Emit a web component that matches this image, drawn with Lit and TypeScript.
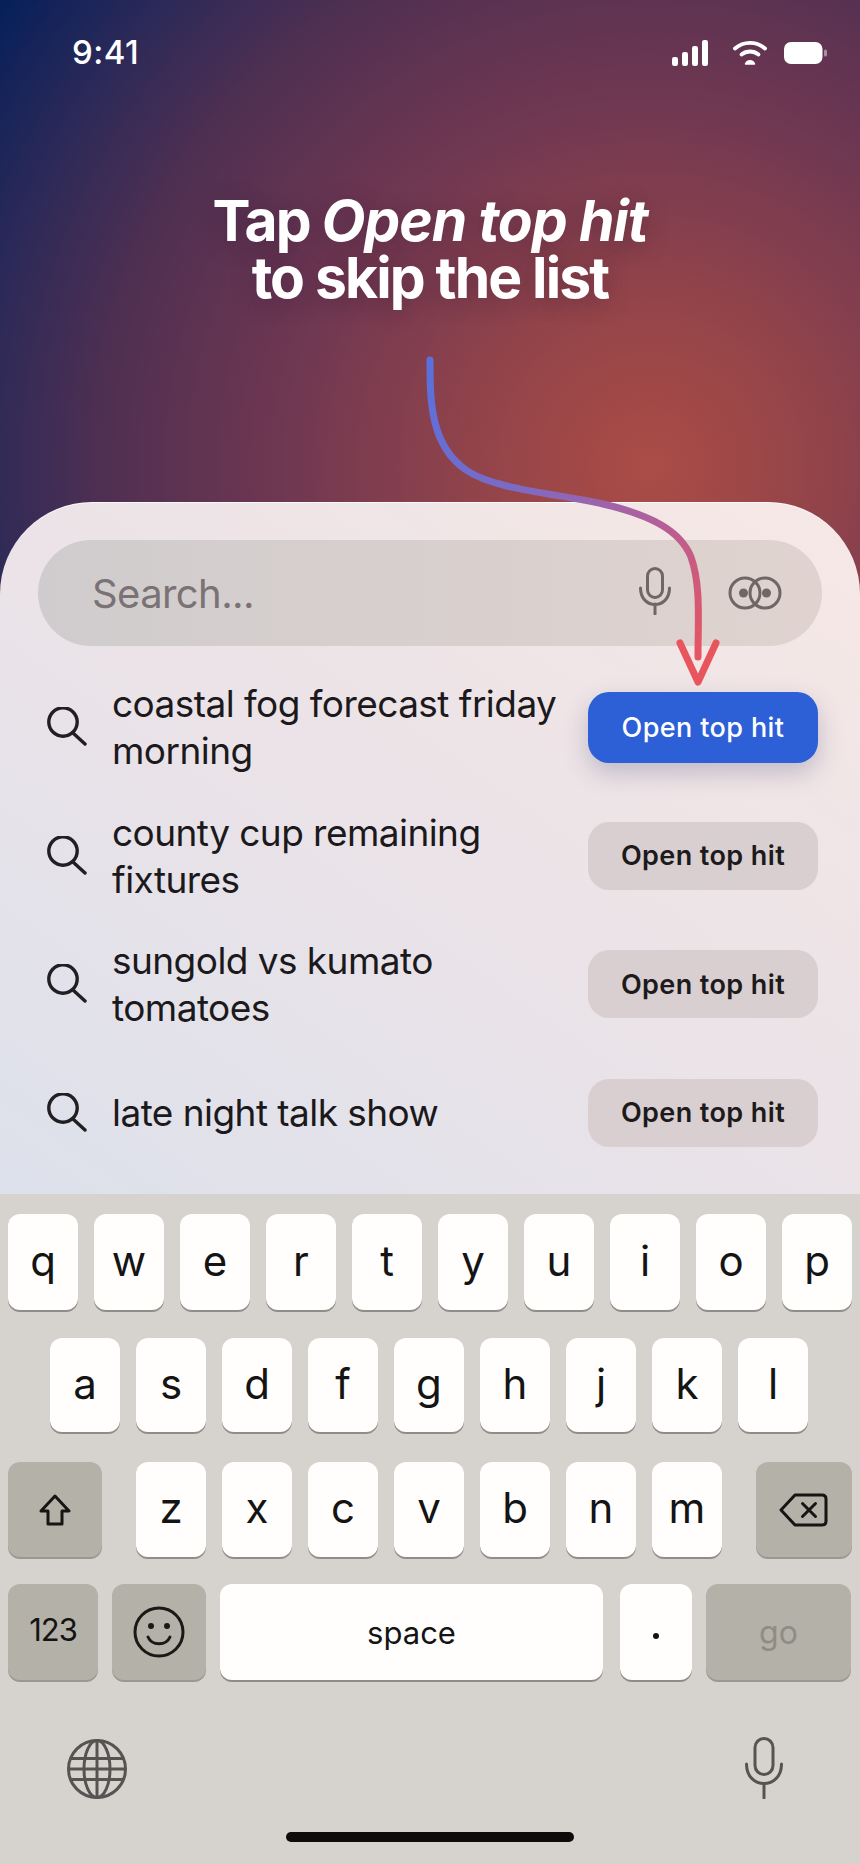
import {css, html, LitElement, svg, TemplateResult} from "lit";
import {customElement} from "lit/decorators.js";

const ROW1 = ["q", "w", "e", "r", "t", "y", "u", "i", "o", "p"];
const ROW2 = ["a", "s", "d", "f", "g", "h", "j", "k", "l"];
const ROW3 = ["z", "x", "c", "v", "b", "n", "m"];

const HITS = [
    {text: "coastal fog forecast friday morning", primary: true},
    {text: "county cup remaining fixtures", primary: false},
    {text: "sungold vs kumato tomatoes", primary: false},
    {text: "late night talk show", primary: false},
];

const searchIcon = svg`<circle cx="16" cy="15" r="14.2" fill="none" stroke="#211f21" stroke-width="3.4"/>
    <path d="M26 26 L38 37" fill="none" stroke="#211f21" stroke-width="3.4" stroke-linecap="round"/>`;

@customElement("app-root")
export class AppRoot extends LitElement {
    private renderHit(hit: {text: string; primary: boolean}): TemplateResult {
        return html`
            <div class="hit">
                <svg class="hit-icon" width="40" height="40" viewBox="0 0 40 40">${searchIcon}</svg>
                <div class="hit-text">${hit.text}</div>
                <div class="hit-btn ${hit.primary ? "primary" : ""}">Open top hit</div>
            </div>
        `;
    }

    private renderKeys(keys: string[]): TemplateResult[] {
        return keys.map((k) => html`<div class="key letter">${k}</div>`);
    }

    render(): TemplateResult {
        return html`
            <div class="hero">
                <div class="status">
                    <div class="time">9:41</div>
                    <div class="status-icons">
                        <svg width="36" height="26" viewBox="0 0 36 26">
                            <rect x="0" y="17" width="6" height="9" rx="2.2" fill="#fff"/>
                            <rect x="10" y="12" width="6" height="14" rx="2.2" fill="#fff"/>
                            <rect x="20" y="6" width="6" height="20" rx="2.2" fill="#fff"/>
                            <rect x="30" y="0" width="6" height="26" rx="2.2" fill="#fff"/>
                        </svg>
                        <svg class="wifi" width="34" height="26" viewBox="0 0 34 26">
                            <path d="M2 8.5 C10.500 1 23.500 1 32 8.500" fill="none" stroke="#fff" stroke-width="3.800" stroke-linecap="round"/>
                            <path d="M8.500 14.500 C13.500 10.500 20.500 10.500 25.500 14.500" fill="none" stroke="#fff" stroke-width="3.800" stroke-linecap="round"/>
                            <path d="M12.500 24 C14 19.500 20 19.500 21.500 24 Z" fill="#fff" stroke="#fff" stroke-width="1.500" stroke-linejoin="round"/>
                        </svg>
                        <svg class="battery" width="44" height="22" viewBox="0 0 44 22">
                            <rect x="0" y="0" width="38.500" height="22" rx="7" fill="#fff"/>
                            <rect x="40" y="7.500" width="3" height="7" rx="1.500" fill="#fff" fill-opacity="0.45"/>
                        </svg>
                    </div>
                </div>
                <div class="headline">Tap <em>Open top hit</em><br />to skip the list</div>
            </div>

            <div class="sheet">
                <div class="search">
                    <div class="search-text">Search...</div>
                    <svg class="search-mic" width="32" height="48" viewBox="0 0 32 48">
                        <rect x="8.500" y="1.500" width="15" height="29" rx="7.500" fill="none" stroke="#6f6666" stroke-width="3"/>
                        <path d="M1.500 21 C1.500 43 30.500 43 30.500 21 M16 37 V47" fill="none" stroke="#6f6666" stroke-width="3" stroke-linecap="round"/>
                    </svg>
                    <svg class="search-loop" width="54" height="34" viewBox="0 0 54 34">
                        <circle cx="17" cy="17" r="15" fill="none" stroke="#6f6666" stroke-width="3"/>
                        <circle cx="37" cy="17" r="15" fill="none" stroke="#6f6666" stroke-width="3"/>
                        <circle cx="15.500" cy="17" r="4.500" fill="#6f6666"/>
                        <circle cx="38.500" cy="17" r="4.500" fill="#6f6666"/>
                    </svg>
                </div>
                <div class="hits">${HITS.map((h) => this.renderHit(h))}</div>
            </div>

            <div class="keyboard">
                <div class="row row-1">${this.renderKeys(ROW1)}</div>
                <div class="row row-2">${this.renderKeys(ROW2)}</div>
                <div class="row row-3">
                    <div class="key dark shift">
                        <svg width="34" height="32" viewBox="0 0 34 32">
                            <path d="M17 2 L31 17 H24 V30 H10 V17 H3 Z" fill="none" stroke="#161514" stroke-width="3" stroke-linejoin="round"/>
                        </svg>
                    </div>
                    <div class="letters">${this.renderKeys(ROW3)}</div>
                    <div class="key dark del">
                        <svg width="50" height="34" viewBox="0 0 50 34">
                            <path d="M2 17 L16 2 H43 Q47 2 47 6 V28 Q47 32 43 32 H16 Z" fill="none" stroke="#161514" stroke-width="3" stroke-linejoin="round"/>
                            <path d="M23.500 10.500 L36.500 23.500 M36.500 10.500 L23.500 23.500" fill="none" stroke="#161514" stroke-width="3" stroke-linecap="round"/>
                        </svg>
                    </div>
                </div>
                <div class="row row-4">
                    <div class="key dark num">123</div>
                    <div class="key dark emoji">
                        <svg width="52" height="52" viewBox="0 0 52 52">
                            <circle cx="26" cy="26" r="24" fill="none" stroke="#1a1918" stroke-width="3"/>
                            <circle cx="18" cy="20" r="3" fill="#1a1918"/>
                            <circle cx="34" cy="20" r="3" fill="#1a1918"/>
                            <path d="M15 31 C19 40 33 40 37 31" fill="none" stroke="#1a1918" stroke-width="3" stroke-linecap="round"/>
                        </svg>
                    </div>
                    <div class="key space">space</div>
                    <div class="key dot"><span></span></div>
                    <div class="key dark go">go</div>
                </div>
                <div class="kb-bottom">
                    <svg width="60" height="60" viewBox="0 0 60 60">
                        <g fill="none" stroke="#565452" stroke-width="3">
                            <circle cx="30" cy="30" r="28.500"/>
                            <ellipse cx="30" cy="30" rx="13" ry="28.500"/>
                            <path d="M30 1.500 V58.500 M3 19.500 H57 M1.500 30 H58.500 M3 40.500 H57"/>
                        </g>
                    </svg>
                    <svg class="kb-mic" width="38" height="62" viewBox="0 0 38 62">
                        <g fill="none" stroke="#565452" stroke-width="3" stroke-linecap="round">
                            <rect x="10" y="1.500" width="18" height="36" rx="9"/>
                            <path d="M1.500 27 C1.500 53 36.500 53 36.500 27 M19 47 V61"/>
                        </g>
                    </svg>
                </div>
                <div class="home-bar"></div>
            </div>

            <svg class="guide" width="860" height="360" viewBox="0 340 860 360">
                <defs>
                    <linearGradient id="guide-grad" gradientUnits="userSpaceOnUse" x1="430" y1="380" x2="700" y2="660">
                        <stop offset="0" stop-color="#5c70dc"/>
                        <stop offset="0.35" stop-color="#7c6ac4"/>
                        <stop offset="0.65" stop-color="#b0609c"/>
                        <stop offset="1" stop-color="#e85560"/>
                    </linearGradient>
                </defs>
                <path d="M430 360 C430 400 430 445 466 470 C495 490 560 494 603 504 C650 515 680 530 691 557 C701 585 698 620 698 657"
                    fill="none" stroke="url(#guide-grad)" stroke-width="7" stroke-linecap="round"/>
                <path d="M680 643 L698 682 L716 643" fill="none" stroke="#e8555c" stroke-width="7" stroke-linecap="round" stroke-linejoin="round"/>
            </svg>
        `;
    }

    static styles = css`
        :host {
            display: flex;
            flex-direction: column;
            position: relative;
            width: 860px;
            height: 1864px;
            overflow: hidden;
            font-family: Inter, "Liberation Sans", sans-serif;
            background: radial-gradient(circle 800px at 650px 465px,
                #ab4c46 0px, #964549 150px, #7f3d4f 280px, #6b3652 390px,
                #5a3251 490px, #4d2f52 555px, #2f2a58 660px, #08205a 790px);
        }

        .hero {
            height: 502px;
            flex: none;
            box-sizing: border-box;
            color: #fff;
        }

        .status {
            display: flex;
            justify-content: space-between;
            align-items: center;
            padding: 39px 32px 0 72px;
            height: 27px;
        }

        .time {
            font-size: 33px;
            font-weight: 500;
            line-height: 27px;
            letter-spacing: 0.5px;
        }

        .status-icons {
            display: flex;
            align-items: center;
        }

        .wifi {
            margin-left: 25px;
        }

        .battery {
            margin-left: 17px;
        }

        .headline {
            margin-top: 126px;
            text-align: center;
            font-size: 57px;
            line-height: 57px;
            font-weight: 700;
            letter-spacing: -1.85px;
            text-shadow: 0 4px 24px rgba(40, 20, 50, 0.3);
        }

        .headline em {
            letter-spacing: -1.1px;
        }

        .sheet {
            flex: 1;
            box-sizing: border-box;
            padding: 37px 38px 0;
            border-radius: 92px 92px 0 0;
            border-top: 1px solid rgba(255, 255, 255, 0.8);
            background: linear-gradient(35deg, #dde1eb 0%, #ebe3e8 50%, #f6e8e5 100%);
        }

        .search {
            display: flex;
            align-items: center;
            height: 106px;
            padding: 0 40px 0 54px;
            border-radius: 53px;
            background: linear-gradient(90deg, #d0cccd 0%, #e0d3cf 100%);
        }

        .search-text {
            flex: 1;
            font-size: 40px;
            letter-spacing: -0.6px;
            color: #7a7274;
        }

        .search-mic {
            flex: none;
            margin-top: -4px;
        }

        .search-loop {
            flex: none;
            margin-left: 57px;
        }

        .hits {
            display: flex;
            flex-direction: column;
            gap: 34.5px;
            margin-top: 35px;
            padding: 0 4px 0 9px;
        }

        .hit {
            display: flex;
            align-items: center;
            height: 94px;
        }

        .hit-icon {
            flex: none;
            margin-top: -2px;
        }

        .hit-text {
            flex: 1;
            margin: -2px 20px 0 25px;
            font-size: 37px;
            line-height: 47px;
            letter-spacing: -0.55px;
            color: #1b191b;
        }

        .hit-btn {
            flex: none;
            display: flex;
            align-items: center;
            justify-content: center;
            width: 230px;
            height: 68px;
            border-radius: 21px;
            margin-top: -2px;
            font-size: 27px;
            font-weight: 600;
            letter-spacing: 0.4px;
            color: #1c1a1c;
            background: #d9cfd1;
        }

        .hit-btn.primary {
            height: 71px;
            font-weight: 500;
            color: #fff;
            background: #2d5fd6;
            box-shadow: 0 10px 24px rgba(50, 60, 110, 0.25);
        }

        .keyboard {
            flex: none;
            height: 670px;
            box-sizing: border-box;
            padding-top: 20px;
            position: relative;
            background: #d6d3ce;
        }

        .row {
            display: flex;
        }

        .row-1 {
            gap: 16px;
            padding-left: 8px;
        }

        .row-2 {
            gap: 16px;
            padding-left: 50px;
            margin-top: 28px;
        }

        .row-3 {
            padding-left: 8px;
            margin-top: 30px;
        }

        .letters {
            display: flex;
            gap: 16px;
            margin-left: 34px;
        }

        .row-4 {
            padding-left: 8px;
            margin-top: 27px;
        }

        .key {
            flex: none;
            display: flex;
            align-items: center;
            justify-content: center;
            box-sizing: border-box;
            width: 70px;
            height: 96px;
            border-radius: 12px;
            background: #fffefc;
            box-shadow: 0 2px 0 #908d89;
            font-size: 42px;
            color: #141414;
        }

        .key.letter {
            padding-bottom: 4px;
        }

        .row-2 .key {
            height: 94px;
        }

        .row-3 .key {
            height: 95px;
        }

        .key.dark {
            background: #b4b1a8;
            box-shadow: 0 2px 0 #9b9890;
        }

        .shift {
            width: 94px;
        }

        .del {
            width: 96px;
            margin-left: 34px;
        }

        .num {
            width: 90px;
            font-size: 31px;
            letter-spacing: -1px;
            padding-bottom: 6px;
        }

        .emoji {
            width: 94px;
            margin-left: 14px;
        }

        .space {
            width: 383px;
            margin-left: 14px;
            font-size: 31px;
        }

        .dot {
            width: 72px;
            margin-left: 17px;
        }

        .dot span {
            width: 6px;
            height: 6px;
            border-radius: 50%;
            background: #141414;
            margin-top: 8px;
        }

        .go {
            width: 145px;
            margin-left: 14px;
            font-size: 32px;
            color: #8f8c85;
        }

        .kb-bottom {
            display: flex;
            justify-content: space-between;
            align-items: center;
            margin-top: 59px;
            padding: 0 77px 0 67px;
        }

        .kb-mic {
            margin-top: -3px;
        }

        .home-bar {
            position: absolute;
            left: 286px;
            bottom: 22px;
            width: 288px;
            height: 10px;
            border-radius: 5px;
            background: #0d0c0a;
        }

        .guide {
            position: absolute;
            left: 0;
            top: 340px;
        }
    `;
}
